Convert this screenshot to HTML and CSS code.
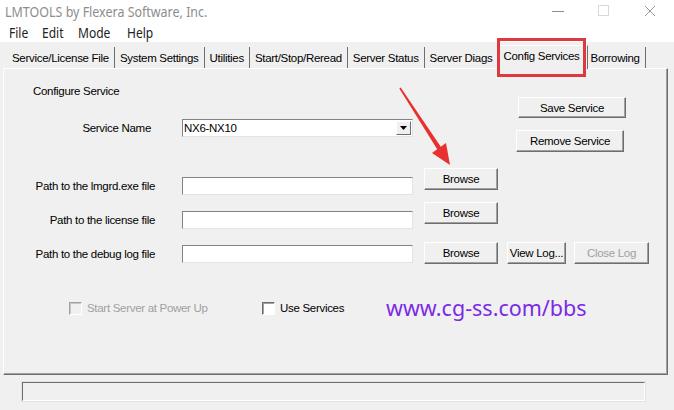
FILE: index.html
```html
<!DOCTYPE html>
<html>
<head>
<meta charset="utf-8">
<link rel="stylesheet" href="styles.css">
</head>
<body>
<div class="window">
  <div class="titlebar">
    <span class="title">LMTOOLS by Flexera Software, Inc.</span>
    <div class="controls">
      <div class="ctl"><svg width="12" height="12" viewBox="0 0 12 12"><line x1="0" y1="6.5" x2="12" y2="6.5" stroke="#8c8c8c" stroke-width="1"/></svg></div>
      <div class="ctl"><svg width="12" height="12" viewBox="0 0 12 12"><rect x="0.5" y="0.5" width="10" height="10" fill="none" stroke="#d8d8d8" stroke-width="1"/></svg></div>
      <div class="ctl"><svg width="12" height="12" viewBox="0 0 12 12"><path d="M1 1 L11 11 M11 1 L1 11" stroke="#9a9a9a" stroke-width="1"/></svg></div>
    </div>
  </div>
  <div class="menubar">
    <span class="menu">File</span><span class="menu">Edit</span><span class="menu">Mode</span><span class="menu">Help</span>
  </div>
  <div class="tabstrip">
    <div class="tab">Service/License File</div>
    <div class="tab">System Settings</div>
    <div class="tab">Utilities</div>
    <div class="tab">Start/Stop/Reread</div>
    <div class="tab">Server Status</div>
    <div class="tab tab-before">Server Diags</div>
    <div class="tab tab-active">Config Services</div>
    <div class="tab">Borrowing</div>
  </div>
  <div class="panel">
    <div class="top">
      <div class="top-left">
        <div class="heading">Configure Service</div>
        <div class="service-row">
          <span class="lbl lbl-svc">Service Name</span>
          <div class="combo">
            <span class="combo-text">NX6-NX10</span>
            <span class="drop"><svg width="7" height="4" viewBox="0 0 7 4"><path d="M0 0 H7 L3.5 4 Z" fill="#000"/></svg></span>
          </div>
        </div>
      </div>
      <div class="top-right">
        <div class="btn btn-save">Save Service</div>
        <div class="btn btn-remove">Remove Service</div>
      </div>
    </div>
    <div class="frow r1">
      <span class="lbl">Path to the lmgrd.exe file</span>
      <div class="field"></div>
      <div class="btn browse">Browse</div>
    </div>
    <div class="frow r2">
      <span class="lbl">Path to the license file</span>
      <div class="field"></div>
      <div class="btn browse">Browse</div>
    </div>
    <div class="frow r3">
      <span class="lbl">Path to the debug log file</span>
      <div class="field"></div>
      <div class="btn browse">Browse</div>
      <div class="btn viewlog">View Log...</div>
      <div class="btn closelog disabled">Close Log</div>
    </div>
    <div class="checks">
      <div class="check check1 disabled"><span class="box"></span><span class="ctext">Start Server at Power Up</span></div>
      <div class="check check2"><span class="box"></span><span class="ctext">Use Services</span></div>
    </div>
  </div>
  <div class="statusbar"></div>
</div>
<div class="annot-box"></div>
<svg class="arrow" width="674" height="410" viewBox="0 0 674 410">
  <polygon points="400.7,87.6 440.8,146.8 446,143 450,165 432,153 437.2,149.2 399.3,88.4" fill="#e8312f"/>
</svg>
<div class="watermark">www.cg-ss.com/bbs</div>
</body>
</html>
```
FILE: styles.css
```css
html, body {
  margin: 0;
  padding: 0;
}
body {
  width: 674px;
  height: 410px;
  overflow: hidden;
  position: relative;
  background: #f0f0f0;
  font-family: "Liberation Sans", Arial, sans-serif;
  font-size: 11.5px;
  letter-spacing: -0.3px;
  color: #000;
}
.window {
  width: 674px;
  height: 410px;
}
.titlebar {
  height: 22px;
  background: #fff;
  display: flex;
  align-items: center;
  padding-left: 5px;
}
.title {
  font-family: "Noto Sans", sans-serif;
  font-size: 14.5px;
  letter-spacing: 0;
  color: #8d8d8d;
  display: inline-block;
  transform: scaleX(0.86);
  transform-origin: left center;
  white-space: nowrap;
}
.controls {
  margin-left: auto;
  display: flex;
  margin-right: 1px;
}
.ctl {
  width: 46px;
  height: 22px;
  display: flex;
  align-items: center;
  justify-content: center;
}
.menubar {
  height: 20px;
  background: #fff;
  display: flex;
  align-items: center;
  padding-left: 9px;
}
.menu {
  font-family: "Noto Sans", sans-serif;
  font-size: 14px;
  letter-spacing: 0;
  color: #222;
  display: inline-block;
  transform: scaleX(0.86);
  transform-origin: left center;
  margin-right: 11px;
}
.tabstrip {
  height: 26px;
  display: flex;
  align-items: flex-end;
  padding-left: 7px;
}
.tab {
  height: 21px;
  padding: 0 5px 0 5px;
  display: flex;
  align-items: center;
  border-right: 1px solid #6e6e6e;
  white-space: nowrap;
  box-sizing: border-box;
}
.tab-before {
  border-right-color: transparent;
  padding-right: 7px;
}
.tab-active {
  height: 24px;
  margin: 0 -2px -1px -2px;
  padding: 0 7px 4px 4px;
  background: #f0f0f0;
  border-top: 1px solid #fff;
  border-left: 1px solid #fff;
  border-right: 1px solid #6e6e6e;
  position: relative;
  z-index: 2;
}
.panel {
  margin-left: 3px;
  width: 665px;
  height: 307px;
  box-sizing: border-box;
  border: 1px solid;
  border-color: #fff #6e6e6e #6e6e6e #fff;
  box-shadow: inset -1px -1px 0 #a0a0a0;
}
.top {
  display: flex;
  height: 99px;
}
.top-left {
  width: 514px;
}
.heading {
  margin: 15px 0 0 29px;
  line-height: 14px;
}
.service-row {
  margin-top: 21px;
  display: flex;
  align-items: center;
  height: 18px;
}
.lbl {
  width: 151px;
  flex: none;
  text-align: right;
  white-space: nowrap;
  box-sizing: border-box;
  height: 18px;
  line-height: 18px;
}
.lbl-svc {
  padding-right: 4px;
}
.combo, .field {
  margin-left: 27px;
  width: 231px;
  height: 18px;
  box-sizing: border-box;
  background: #fff;
  border: 1px solid;
  border-color: #828282 #e3e3e3 #e3e3e3 #828282;
  flex: none;
}
.combo {
  display: flex;
  align-items: center;
  position: relative;
}
.combo-text {
  padding-left: 1px;
}
.drop {
  margin-left: auto;
  margin-right: 1px;
  width: 15px;
  height: 14px;
  box-sizing: border-box;
  background: #f0f0f0;
  border: 1px solid;
  border-color: #fff #6e6e6e #6e6e6e #fff;
  display: flex;
  align-items: center;
  justify-content: center;
}
.top-right {
  display: flex;
  flex-direction: column;
  align-items: flex-start;
}
.btn {
  box-sizing: border-box;
  height: 22px;
  border: 1px solid;
  border-color: #fff #6e6e6e #6e6e6e #fff;
  box-shadow: inset -1px -1px 0 #a0a0a0;
  background: #f0f0f0;
  display: flex;
  align-items: center;
  justify-content: center;
  white-space: nowrap;
  flex: none;
}
.btn-save {
  margin-top: 28px;
  width: 108px;
  height: 21px;
}
.btn-remove {
  margin-top: 12px;
  margin-left: -2px;
  width: 108px;
}
.frow {
  display: flex;
  align-items: flex-start;
}
.r1 { height: 34px; }
.r2 { height: 40px; }
.r3 { height: 22px; }
.r1 .lbl, .r1 .field,
.r2 .lbl, .r2 .field {
  margin-top: 9px;
}
.r3 .lbl, .r3 .field {
  margin-top: 3px;
}
.frow .field {
  margin-left: 27px;
}
.browse {
  margin-left: 11px;
  width: 74px;
}
.viewlog {
  margin-left: 9px;
  width: 59px;
}
.closelog {
  margin-left: 8px;
  width: 75px;
}
.disabled {
  color: #a0a0a0;
}
.checks {
  margin-top: 37px;
  height: 14px;
  display: flex;
  align-items: center;
}
.check {
  display: flex;
  align-items: center;
}
.check1 {
  margin-left: 65px;
  width: 193px;
}
.box {
  width: 13px;
  height: 13px;
  box-sizing: border-box;
  background: #fff;
  border: 1px solid;
  border-color: #6e6e6e #fff #fff #6e6e6e;
  box-shadow: inset 1px 1px 0 #a0a0a0;
  flex: none;
}
.check1 .box {
  background: #f0f0f0;
  border-color: #a0a0a0 #fff #fff #a0a0a0;
  box-shadow: inset 1px 1px 0 #c8c8c8;
}
.ctext {
  margin-left: 5px;
  white-space: nowrap;
}
.statusbar {
  margin: 7px 0 0 22px;
  width: 623px;
  height: 19px;
  box-sizing: border-box;
  border: 1px solid;
  border-color: #6e6e6e #fff #fff #6e6e6e;
  box-shadow: 0 0 0 1px #e2e2e2;
}
.annot-box {
  position: absolute;
  left: 497px;
  top: 38px;
  width: 89px;
  height: 39px;
  box-sizing: border-box;
  border: 3px solid #dc3a3e;
  z-index: 5;
}
.arrow {
  position: absolute;
  left: 0;
  top: 0;
  z-index: 6;
  pointer-events: none;
}
.watermark {
  position: absolute;
  left: 386px;
  top: 293px;
  font-family: "Noto Sans", sans-serif;
  font-size: 21.5px;
  letter-spacing: 0;
  color: #7b2ae6;
  white-space: nowrap;
  z-index: 6;
}
```
